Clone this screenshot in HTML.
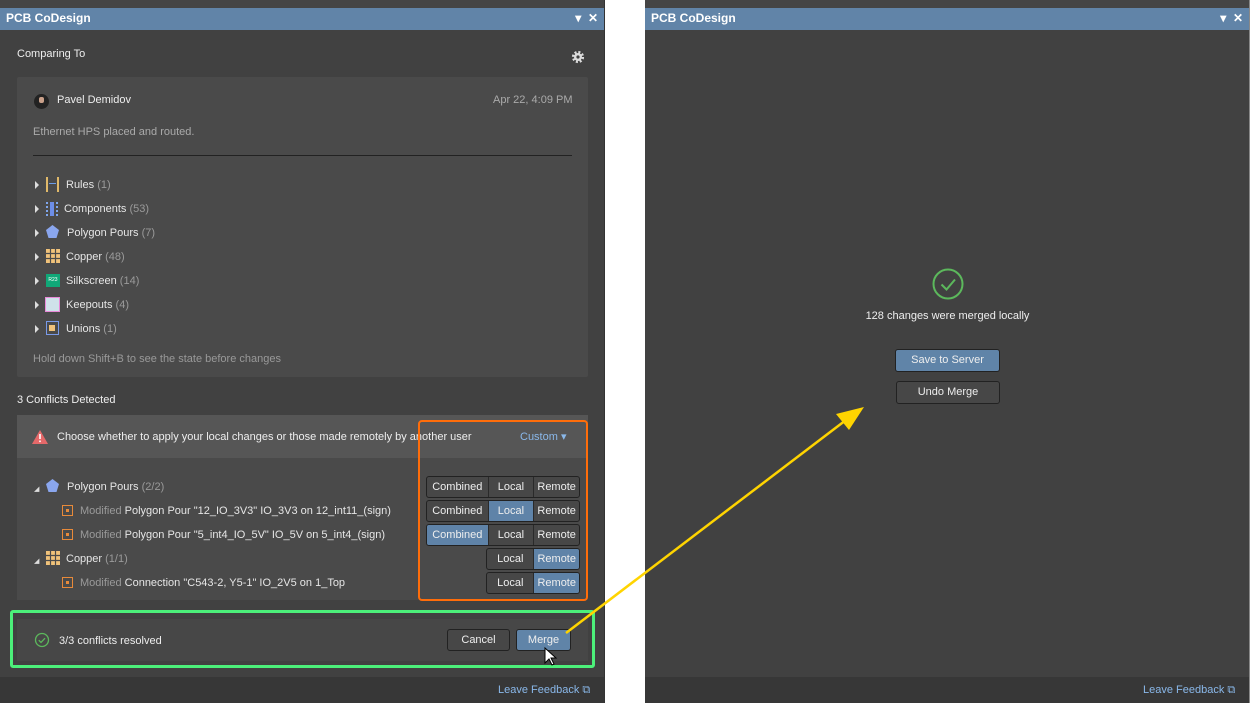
<!DOCTYPE html>
<html><head><meta charset="utf-8"><style>
*{margin:0;padding:0;box-sizing:border-box}
body{width:1250px;height:703px;background:#fff;position:relative;overflow:hidden;font-family:"Liberation Sans",sans-serif;font-size:11px;line-height:15px;color:#e6e6e6}
.a{position:absolute;white-space:nowrap}
.panel{position:absolute;top:0;height:703px;background:#414141}
.title{position:absolute;left:0;right:0;top:8px;height:22px;background:#6184a8;color:#fff;font-weight:bold;font-size:12px;padding:3px 6px}
.title .c{position:absolute;right:6px;top:3px;font-size:12px}
.foot{position:absolute;left:0;right:0;bottom:0;height:26px;background:#373737}
.fb{position:absolute;bottom:5px;color:#8ab8ea;font-size:11px}
.g{color:#9a9a9a}
.btn{position:absolute;height:22px;border:1px solid #222;border-radius:3px;background:#474747;color:#eee;text-align:center;line-height:21px;font-size:11px}
.seg{position:absolute;height:22px;border:1px solid #222;border-radius:3px;display:flex;overflow:hidden;background:#474747}
.seg span{display:block;text-align:center;line-height:21px;border-left:1px solid #2a2a2a;color:#eee}
.seg span:first-child{border-left:none}
.seg .s{background:#5f83a8}
.tri{position:absolute;width:0;height:0;border-top:4px solid transparent;border-bottom:4px solid transparent;border-left:4px solid #ddd}
.mi{position:absolute;width:11px;height:11px;border:1px solid #e88a3a}
.mi:after{content:"";position:absolute;left:3px;top:3px;width:3px;height:3px;background:#e88a3a}
</style></head><body>

<div class="panel" style="left:0;width:605px;border-right:1px solid #333">
  <div style="position:absolute;left:0;right:0;top:0;height:8px;background:#454545"></div>
  <div class="title">PCB CoDesign<span class="c">▾&nbsp;&nbsp;✕</span></div>
  <div class="a" style="left:17px;top:47px;font-size:11px;color:#eee">Comparing To</div>
  <svg class="a" style="left:571px;top:50px" width="14" height="14" viewBox="0 0 14 14"><circle cx="7" cy="7" r="4.8" fill="none" stroke="#ddd" stroke-width="2.6" stroke-dasharray="2 1.8"/><circle cx="7" cy="7" r="4" fill="#ddd"/><circle cx="7" cy="7" r="1.6" fill="#414141"/></svg>

  <div class="a" style="left:17px;top:77px;width:571px;height:300px;background:#4a4a4a;border-radius:2px"></div>
  <div class="a" style="left:34px;top:94px;width:15px;height:15px;border-radius:50%;background:#222;overflow:hidden"><div style="margin:3px 0 0 5px;width:5px;height:6px;background:#c9a08a;border-radius:2px"></div></div>
  <div class="a" style="left:57px;top:93px;color:#eee">Pavel Demidov</div>
  <div class="a" style="left:493px;top:93px;color:#aaa">Apr 22, 4:09 PM</div>
  <div class="a" style="left:33px;top:125px;color:#aaa">Ethernet HPS placed and routed.</div>
  <div class="a" style="left:33px;top:155px;width:539px;height:1px;background:#222"></div>

  <div class="tri" style="left:35px;top:181px"></div><div class="a" style="left:46px;top:177px;width:13px;height:15px;border-left:2px solid #e0b96a;border-right:2px solid #e0b96a"><div style="margin:6px 1px 0;height:1px;background:#6d9ee8"></div></div><div class="a" style="left:66px;top:178px">Rules <span class="g">(1)</span></div>
  <div class="tri" style="left:35px;top:205px"></div><div class="a" style="left:46px;top:202px;width:12px;height:14px;border-left:2px dotted #7fa6ec;border-right:2px dotted #7fa6ec"><div style="margin:0 2px;height:14px;background:#6d8ee8"></div></div><div class="a" style="left:64px;top:202px">Components <span class="g">(53)</span></div>
  <div class="tri" style="left:35px;top:229px"></div><svg class="a" style="left:45px;top:224px" width="15" height="15"><polygon points="7.5,1 14,6 11.5,14 3.5,14 1,6" fill="#8aa6ee"/></svg><div class="a" style="left:67px;top:226px">Polygon Pours <span class="g">(7)</span></div>
  <div class="tri" style="left:35px;top:253px"></div><svg class="a" style="left:46px;top:249px" width="14" height="14"><rect width="14" height="14" fill="#f0c27a"/><path d="M0 4.5h14M0 9.5h14M4.5 0v14M9.5 0v14" stroke="#4a4a4a" stroke-width="1.2"/></svg><div class="a" style="left:66px;top:250px">Copper <span class="g">(48)</span></div>
  <div class="tri" style="left:35px;top:277px"></div><div class="a" style="left:46px;top:274px;width:14px;height:13px;background:#10a878;color:#fff;font-size:5px;line-height:13px;text-align:center">R23</div><div class="a" style="left:66px;top:274px">Silkscreen <span class="g">(14)</span></div>
  <div class="tri" style="left:35px;top:301px"></div><div class="a" style="left:45px;top:297px;width:15px;height:15px;border:1px solid #e88ad8;background:#cfe2ea"></div><div class="a" style="left:66px;top:298px">Keepouts <span class="g">(4)</span></div>
  <div class="tri" style="left:35px;top:325px"></div><div class="a" style="left:46px;top:321px;width:13px;height:14px;border:1px solid #7a9ae8"><div style="margin:3px 0 0 2px;width:6px;height:6px;background:#f0c27a"></div></div><div class="a" style="left:66px;top:322px">Unions <span class="g">(1)</span></div>
  <div class="a" style="left:33px;top:352px;color:#999">Hold down Shift+B to see the state before changes</div>

  <div class="a" style="left:17px;top:393px;color:#eee">3 Conflicts Detected</div>
  <div class="a" style="left:17px;top:415px;width:571px;height:185px;background:#4a4a4a"></div>
  <div class="a" style="left:17px;top:415px;width:571px;height:43px;background:#565656"></div>
  <svg class="a" style="left:32px;top:430px" width="16" height="14"><polygon points="8,0 16,14 0,14" fill="#e5696a"/><rect x="7.2" y="4" width="1.6" height="5" fill="#fff"/><rect x="7.2" y="10.5" width="1.6" height="1.6" fill="#fff"/></svg>
  <div class="a" style="left:57px;top:430px;color:#eee">Choose whether to apply your local changes or those made remotely by another user</div>
  <div class="a" style="left:520px;top:430px;color:#8ab8ea">Custom ▾</div>

  <div class="a" style="left:34px;top:482px;font-size:7px;color:#ddd">◢</div>
  <svg class="a" style="left:45px;top:478px" width="15" height="15"><polygon points="7.5,1 14,6 11.5,14 3.5,14 1,6" fill="#8aa6ee"/></svg>
  <div class="a" style="left:67px;top:480px">Polygon Pours <span class="g">(2/2)</span></div>
  <div class="mi" style="left:62px;top:505px"></div>
  <div class="a" style="left:80px;top:504px"><span class="g">Modified</span> Polygon Pour "12_IO_3V3" IO_3V3 on 12_int11_(sign)</div>
  <div class="mi" style="left:62px;top:529px"></div>
  <div class="a" style="left:80px;top:528px"><span class="g">Modified</span> Polygon Pour "5_int4_IO_5V" IO_5V on 5_int4_(sign)</div>
  <div class="a" style="left:34px;top:554px;font-size:7px;color:#ddd">◢</div>
  <svg class="a" style="left:46px;top:551px" width="14" height="14"><rect width="14" height="14" fill="#f0c27a"/><path d="M0 4.5h14M0 9.5h14M4.5 0v14M9.5 0v14" stroke="#4a4a4a" stroke-width="1.2"/></svg>
  <div class="a" style="left:66px;top:552px">Copper <span class="g">(1/1)</span></div>
  <div class="mi" style="left:62px;top:577px"></div>
  <div class="a" style="left:80px;top:576px"><span class="g">Modified</span> Connection "C543-2, Y5-1" IO_2V5 on 1_Top</div>

  <div class="seg" style="left:426px;top:476px;width:154px"><span style="width:61px">Combined</span><span style="width:46px">Local</span><span style="width:46px">Remote</span></div>
  <div class="seg" style="left:426px;top:500px;width:154px"><span style="width:61px">Combined</span><span class="s" style="width:46px">Local</span><span style="width:46px">Remote</span></div>
  <div class="seg" style="left:426px;top:524px;width:154px"><span class="s" style="width:61px">Combined</span><span style="width:46px">Local</span><span style="width:46px">Remote</span></div>
  <div class="seg" style="left:486px;top:548px;width:94px"><span style="width:47px">Local</span><span class="s" style="width:46px">Remote</span></div>
  <div class="seg" style="left:486px;top:572px;width:94px"><span style="width:47px">Local</span><span class="s" style="width:46px">Remote</span></div>
  <div class="a" style="left:418px;top:420px;width:170px;height:181px;border:2px solid #ff6d0a;border-radius:4px"></div>

  <div class="a" style="left:17px;top:619px;width:571px;height:42px;background:#474747"></div>
  <svg class="a" style="left:34px;top:632px" width="16" height="16"><circle cx="8" cy="8" r="6.5" fill="none" stroke="#5cb85c" stroke-width="1.3"/><path d="M4.8 8.2l2.2 2.2 4-4.2" fill="none" stroke="#5cb85c" stroke-width="1.3"/></svg>
  <div class="a" style="left:59px;top:634px;color:#eee">3/3 conflicts resolved</div>
  <div class="btn" style="left:447px;top:629px;width:63px">Cancel</div>
  <div class="btn" style="left:516px;top:629px;width:55px;background:#6084a8">Merge</div>
  <div class="a" style="left:10px;top:610px;width:585px;height:58px;border:3px solid #4cf07a;border-radius:3px"></div>
  <svg class="a" style="left:544px;top:647px" width="14" height="20"><path d="M1 1v15l4-4 3 6 2-1-3-6h5z" fill="#fff" stroke="#000" stroke-width="1"/></svg>

  <div class="foot"></div>
  <div class="fb" style="left:498px">Leave Feedback ⧉</div>
</div>

<div class="panel" style="left:645px;width:604px">
  <div style="position:absolute;left:0;right:0;top:0;height:8px;background:#454545"></div>
  <div class="title">PCB CoDesign<span class="c">▾&nbsp;&nbsp;✕</span></div>
  <svg class="a" style="left:287px;top:268px" width="32" height="32"><circle cx="16" cy="16" r="14.5" fill="none" stroke="#5cb85c" stroke-width="2"/><path d="M9.5 16.5l5 5 8.5-10" fill="none" stroke="#5cb85c" stroke-width="2"/></svg>
  <div class="a" style="left:0;width:605px;text-align:center;top:309px;color:#eee">128 changes were merged locally</div>
  <div class="btn" style="left:250px;top:349px;width:105px;height:23px;background:#6084a8">Save to Server</div>
  <div class="btn" style="left:251px;top:381px;width:104px;height:23px">Undo Merge</div>
  <div class="foot"></div>
  <div class="fb" style="left:498px">Leave Feedback ⧉</div>
</div>
<div class="a" style="left:1249px;top:0;width:1px;height:703px;background:#888"></div>

<svg class="a" style="left:0;top:0" width="1250" height="703"><line x1="566" y1="633" x2="846" y2="420" stroke="#ffd400" stroke-width="2.5"/><polygon points="864,407 836,414 849,430" fill="#ffd400"/></svg>
</body></html>
